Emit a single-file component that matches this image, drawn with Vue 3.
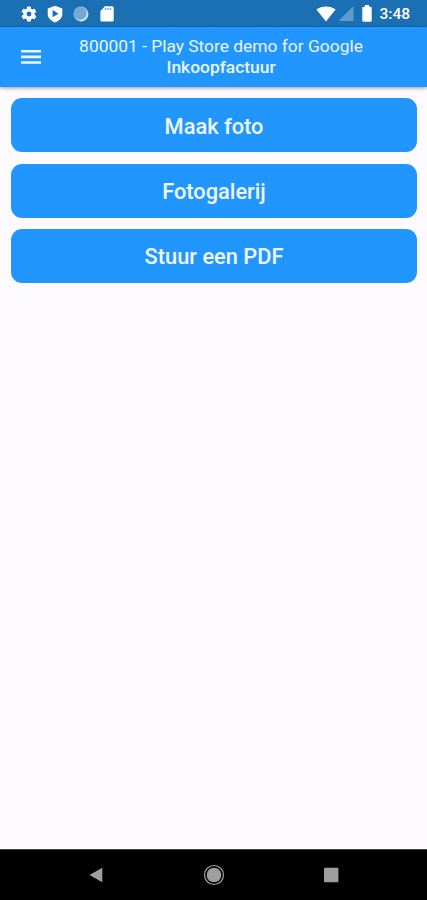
<template>
  <div class="screen">
    <div class="status-bar">
      <div class="status-left">
        <svg width="18" height="18" viewBox="0 0 24 24" fill="#fff">
          <path d="M19.4 13a7.8 7.8 0 0 0 0-2l2.1-1.6a.5.5 0 0 0 .1-.7l-2-3.4a.5.5 0 0 0-.6-.2l-2.5 1a7.3 7.3 0 0 0-1.7-1l-.4-2.6a.5.5 0 0 0-.5-.5h-4a.5.5 0 0 0-.5.5L9 5.1a7.7 7.7 0 0 0-1.7 1l-2.5-1a.5.5 0 0 0-.6.2l-2 3.4a.5.5 0 0 0 .1.7L4.5 11a8 8 0 0 0 0 2l-2.2 1.6a.5.5 0 0 0-.1.7l2 3.4c.1.2.4.3.6.2l2.5-1a7.3 7.3 0 0 0 1.7 1l.4 2.6c0 .3.2.5.5.5h4c.3 0 .5-.2.5-.5l.4-2.6a7.7 7.7 0 0 0 1.7-1l2.5 1c.2.1.5 0 .6-.2l2-3.4a.5.5 0 0 0-.1-.7zM12 15.2a3.2 3.2 0 1 1 0-6.4 3.2 3.2 0 0 1 0 6.4z" />
        </svg>
        <svg width="18" height="18" viewBox="0 0 18 18">
          <path d="M9 .7 16.3 3.5V9c0 3.8-3 6.8-7.3 8.4C4.7 15.8 1.7 12.8 1.7 9V3.5z" fill="#fff" />
          <path d="M6.6 5 12.5 8.7 6.6 12.3z" fill="#1b6fb3" />
        </svg>
        <svg width="18" height="18" viewBox="0 0 18 18">
          <circle cx="9" cy="9" r="7.5" fill="#9cc3e3" />
          <circle cx="8.2" cy="8.2" r="6.3" fill="#75a9d3" />
          <path d="M15.2 7A6.8 6.8 0 0 1 7.5 15.6" fill="none" stroke="#d8e9f7" stroke-width="1.3" />
        </svg>
        <svg width="18" height="18" viewBox="0 0 18 18">
          <path d="M7 1.2h7a1.7 1.7 0 0 1 1.7 1.7v12a1.7 1.7 0 0 1-1.7 1.7H4.1a1.7 1.7 0 0 1-1.7-1.7V6z" fill="#fff" />
          <path d="M7.5 3v2M10 3v2M12.5 3v2" stroke="#6fa8d6" stroke-width="1.5" />
        </svg>
      </div>
      <div class="status-right">
        <svg width="20" height="16" viewBox="0 0 20 16">
          <path d="M.4 3.5C5.6-.4 14.400-.4 19.600 3.500L10 15.500z" fill="#fff" />
        </svg>
        <svg class="signal" width="16" height="15" viewBox="0 0 16 15">
          <path d="M15.5 0V15H.5z" fill="#5e9bcd" />
        </svg>
        <svg class="battery" width="10" height="17" viewBox="0 0 10 17">
          <path d="M3 0h4v1.8h1.500a1.200 1.200 0 0 1 1.200 1.200v12.500a1.200 1.200 0 0 1-1.200 1.200h-7A1.200 1.200 0 0 1 .3 15.500V3a1.200 1.200 0 0 1 1.200-1.200H3z" fill="#fff" />
        </svg>
        <span class="clock">3:48</span>
      </div>
    </div>

    <header class="app-bar">
      <button class="menu" aria-label="Menu">
        <svg width="20" height="14" viewBox="0 0 20 14" fill="#e9f5ff">
          <path d="M0 0h20v2.6H0zM0 5.6h20v2.6H0zM0 11.2h20v2.6H0z" />
        </svg>
      </button>
      <div class="title">
        <div>800001 - Play Store demo for Google</div>
        <div class="doc-type">Inkoopfactuur</div>
      </div>
    </header>

    <main class="content">
      <button v-for="action in actions" :key="action" class="action">{{ action }}</button>
    </main>

    <nav class="nav-bar">
      <svg width="22" height="22" viewBox="0 0 22 22">
        <path d="M3.5 11 16.3 3.7V18.3z" fill="#9e9e9e" />
      </svg>
      <svg width="22" height="22" viewBox="0 0 22 22">
        <circle cx="11" cy="11" r="9.5" fill="none" stroke="#9e9e9e" stroke-width="1.2" />
        <circle cx="11" cy="11" r="7.3" fill="#9e9e9e" />
      </svg>
      <svg width="22" height="22" viewBox="0 0 22 22">
        <rect x="4" y="3.8" width="14.4" height="14.4" rx="1" fill="#9e9e9e" />
      </svg>
    </nav>
  </div>
</template>

<script setup>
const actions = ['Maak foto', 'Fotogalerij', 'Stuur een PDF']
</script>

<style>
body {
  margin: 0;
}
</style>

<style scoped>
.screen {
  display: flex;
  flex-direction: column;
  height: 900px;
  overflow: hidden;
  background: #fdfbff;
  font-family: Roboto, "Liberation Sans", sans-serif;
}

button {
  border: none;
  font-family: inherit;
}

svg {
  display: block;
}

.status-bar {
  display: flex;
  justify-content: space-between;
  align-items: center;
  height: 26.5px;
  box-sizing: border-box;
  padding: 1px 17px 0 20px;
  background: #1b6fb3;
}

.status-left {
  display: flex;
  gap: 8px;
}

.status-right {
  display: flex;
  align-items: center;
}

.signal {
  margin-left: 2px;
}

.battery {
  margin-left: 8px;
}

.clock {
  margin-left: 7px;
  padding-top: 1px;
  color: #fff;
  font-size: 15.5px;
  font-weight: 500;
  line-height: 20px;
}

.app-bar {
  display: flex;
  align-items: center;
  height: 60.5px;
  background: #2196ff;
  box-shadow: 0 1px 4px rgba(0, 0, 0, 0.4);
  color: #e9f5ff;
}

.menu {
  margin-left: 21px;
  padding: 0;
  background: none;
}

.title {
  width: 360px;
  text-align: center;
  font-size: 17.4px;
  line-height: 20.5px;
}

.doc-type {
  font-weight: 500;
}

.content {
  display: flex;
  flex: 1;
  flex-direction: column;
  gap: 11.3px;
  padding: 11.3px 10px 0 11px;
}

.action {
  height: 54px;
  padding: 2px 0 0;
  border-radius: 11px;
  background: #2196ff;
  color: #f0f8ff;
  font-size: 21.8px;
  font-weight: 500;
}

.nav-bar {
  display: flex;
  justify-content: space-between;
  align-items: center;
  height: 51px;
  box-sizing: border-box;
  padding: 0 85px 1px 86px;
  border-top: 1px solid #444;
  background: #000;
}
</style>
